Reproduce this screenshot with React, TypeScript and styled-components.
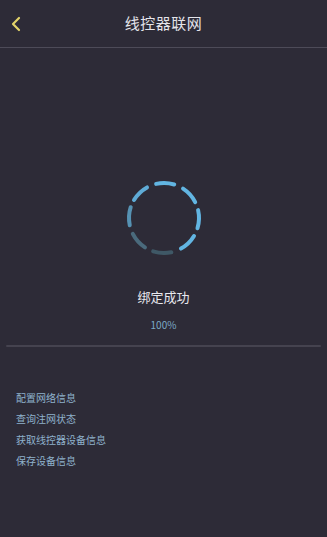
import React from 'react';
import styled, { createGlobalStyle } from 'styled-components';

const GlobalStyle = createGlobalStyle`
  html, body {
    margin: 0;
    padding: 0;
    background: #2d2b37;
  }
  body {
    font-family: "Noto Sans CJK SC", "Noto Sans", sans-serif;
  }
`;

const Page = styled.div`
  width: 327px;
  height: 537px;
  background: #2d2b37;
  display: flex;
  flex-direction: column;
  overflow: hidden;
`;

const Header = styled.div`
  height: 47px;
  display: flex;
  align-items: center;
  justify-content: center;
  position: relative;
  border-bottom: 1px solid #4d4b58;
`;

const Back = styled.div`
  position: absolute;
  left: 9px;
  top: 14px;
  width: 14px;
  height: 18px;
`;

const Title = styled.div`
  color: #e4e4ea;
  font-size: 15px;
  letter-spacing: 0.5px;
  margin-top: -2px;
`;

const Center = styled.div`
  display: flex;
  flex-direction: column;
  align-items: center;
  padding-top: 130px;
`;

const Status = styled.div`
  color: #e8e8ee;
  font-size: 13px;
  margin-top: 30px;
  line-height: 18px;
`;

const Percent = styled.div`
  color: #7ba9c6;
  font-size: 10px;
  margin-top: 13px;
  line-height: 12px;
`;

const Divider = styled.div`
  margin: 14px 6px 0 6px;
  height: 2px;
  background: #45434f;
  border-radius: 1px;
`;

const Steps = styled.div`
  display: flex;
  flex-direction: column;
  gap: 7px;
  padding: 44px 0 0 16px;
`;

const Step = styled.div`
  color: #8fb2cc;
  font-size: 10px;
  line-height: 14px;
`;

const segments = [
  { a: -88, c: '#62b5e2' },
  { a: -42, c: '#62b5e2' },
  { a: 2, c: '#62b5e2' },
  { a: 46, c: '#62b5e2' },
  { a: 93, c: '#3f5866' },
  { a: 138, c: '#4a6a7c' },
  { a: 183, c: '#5692b3' },
  { a: 226, c: '#5fabd6' },
];

function Spinner() {
  const r = 35;
  const cx = 40;
  const cy = 40;
  const half = 15;
  return (
    <svg width="80" height="80" viewBox="0 0 80 80">
      {segments.map((s, i) => {
        const a1 = ((s.a - half) * Math.PI) / 180;
        const a2 = ((s.a + half) * Math.PI) / 180;
        const x1 = cx + r * Math.cos(a1);
        const y1 = cy + r * Math.sin(a1);
        const x2 = cx + r * Math.cos(a2);
        const y2 = cy + r * Math.sin(a2);
        return (
          <path
            key={i}
            d={`M${x1} ${y1} A${r} ${r} 0 0 1 ${x2} ${y2}`}
            stroke={s.c}
            strokeWidth="4"
            strokeLinecap="round"
            fill="none"
          />
        );
      })}
    </svg>
  );
}

export default function App() {
  return (
    <Page>
      <GlobalStyle />
      <Header>
        <Back>
          <svg width="14" height="18" viewBox="0 0 14 18">
            <path d="M10 3 L4 9 L10 15" stroke="#e2d36a" strokeWidth="2.2" fill="none" strokeLinecap="round" strokeLinejoin="round" />
          </svg>
        </Back>
        <Title>线控器联网</Title>
      </Header>
      <Center>
        <Spinner />
        <Status>绑定成功</Status>
        <Percent>100%</Percent>
      </Center>
      <Divider />
      <Steps>
        <Step>配置网络信息</Step>
        <Step>查询注网状态</Step>
        <Step>获取线控器设备信息</Step>
        <Step>保存设备信息</Step>
      </Steps>
    </Page>
  );
}
